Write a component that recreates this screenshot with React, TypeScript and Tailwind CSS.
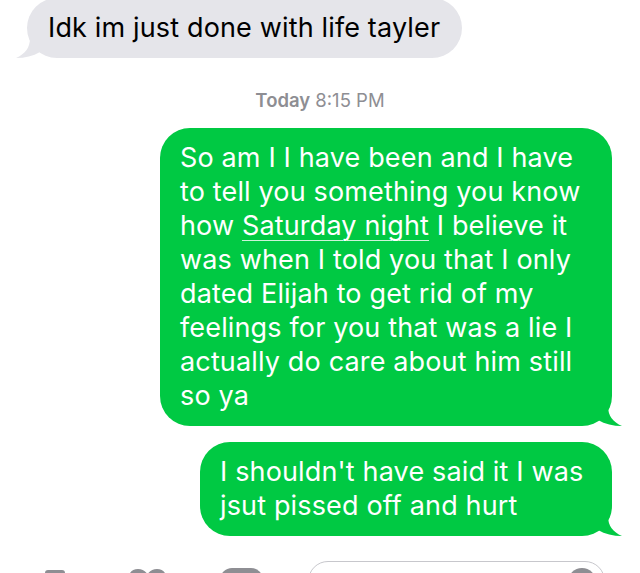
import React from "react";

const font = { fontFamily: "Inter, 'Liberation Sans', sans-serif" };

const firstLines: React.ReactNode[] = [
  "So am I I have been and I have",
  "to tell you something you know",
  <>
    how{" "}
    <span className="underline decoration-1 underline-offset-[5px] decoration-white/80">
      Saturday night
    </span>{" "}
    I believe it
  </>,
  "was when I told you that I only",
  "dated Elijah to get rid of my",
  "feelings for you that was a lie I",
  "actually do care about him still",
  "so ya",
];

const secondLines = ["I shouldn't have said it I was", "jsut pissed off and hurt"];

const TailLeft = () => (
  <svg
    className="absolute bottom-0 left-[-11px]"
    width="24"
    height="20"
    viewBox="0 0 24 20"
  >
    <path d="M14 0 C14 10 9 16 0 20 C9 20 17 18 24 14 L24 0 Z" fill="#e5e5ea" />
  </svg>
);

const TailRight = () => (
  <svg
    className="absolute bottom-0 right-[-10px]"
    width="24"
    height="20"
    viewBox="0 0 24 20"
  >
    <path d="M10 0 C10 10 15 16 24 20 C15 20 7 18 0 14 L0 0 Z" fill="#00c943" />
  </svg>
);

const SentBubble = ({ lines, width }: { lines: React.ReactNode[]; width: string }) => (
  <div className={`relative self-end mr-[28px] ${width}`}>
    <div className="rounded-[30px] bg-[#00c943] py-[13px] pl-[20px] pr-[16px] text-[27px] leading-[34px] tracking-[0.15px] text-white">
      {lines.map((line, i) => (
        <div key={i} className="whitespace-nowrap">
          {line}
        </div>
      ))}
    </div>
    <TailRight />
  </div>
);

export default function App() {
  return (
    <div className="flex h-[573px] w-[640px] flex-col overflow-hidden bg-white" style={font}>
      {/* RECEIVED */}
      <div className="relative ml-[27px] -mt-[2px] w-[435px]">
        <div className="whitespace-nowrap rounded-[30px] bg-[#e5e5ea] py-[13px] pl-[21px] text-[27px] leading-[34px] tracking-[0.15px] text-black">
          Idk im just done with life tayler
        </div>
        <TailLeft />
      </div>

      {/* TIMESTAMP */}
      <div className="mt-[31px] text-center text-[18.5px] leading-[22px] text-[#8e8e93]">
        <span className="font-semibold">Today</span> 8:15 PM
      </div>

      {/* SENT */}
      <div className="mt-[17px] flex flex-col gap-[16px]">
        <SentBubble lines={firstLines} width="w-[452px]" />
        <SentBubble lines={secondLines} width="w-[412px]" />
      </div>

      {/* INPUT BAR */}
      <div className="mt-[25px] flex items-start">
        <div className="ml-[45px] mt-[9px] h-[16px] w-[20px] rounded-[3px] bg-[#8e8e93]" />
        <svg className="ml-[63px] mt-[8px]" width="39" height="30" viewBox="0 0 39 30">
          <path
            d="M19.5 29 C8 20 1 14 1 8 C1 3 5 0 10 0 C14 0 17 2 19.5 5 C22 2 25 0 29 0 C34 0 38 3 38 8 C38 14 31 20 19.5 29 Z"
            fill="#8e8e93"
          />
        </svg>
        <div className="ml-[53px] mt-[7px] h-[30px] w-[43px] rounded-[12px] bg-[#8e8e93]" />
        <div className="ml-[45px] flex h-[40px] w-[297px] items-start justify-end rounded-full border border-[#c7c7cc] pr-[8px] pt-[6px]">
          <div className="h-[28px] w-[28px] rounded-full bg-[#8e8e93]" />
        </div>
      </div>
    </div>
  );
}
